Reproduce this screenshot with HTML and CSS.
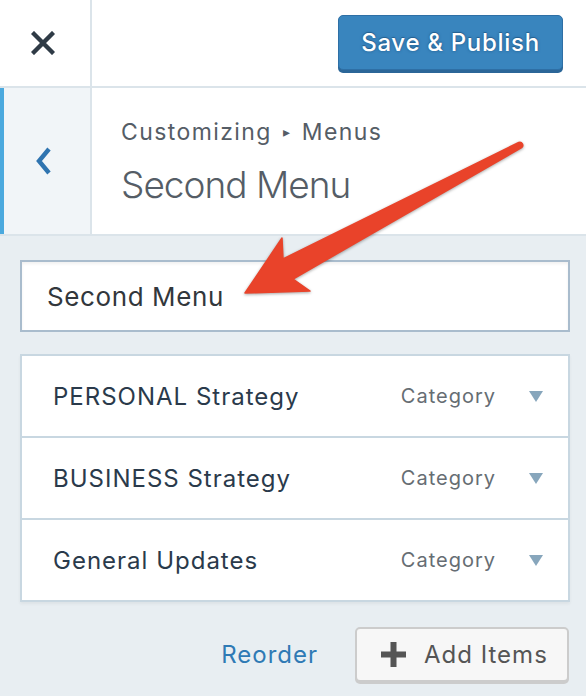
FILE: index.html
```html
<!DOCTYPE html>
<html>
<head>
<meta charset="utf-8">
<link rel="stylesheet" href="styles.css">
</head>
<body>
<div class="panel">
  <header class="topbar">
    <div class="close">
      <svg width="24" height="24" viewBox="0 0 24 24"><path d="M3 3 L21 21 M21 3 L3 21" stroke="#2f3b46" stroke-width="4.4" stroke-linecap="square" fill="none"/></svg>
    </div>
    <div class="actions">
      <button class="btn-primary">Save &amp; Publish</button>
    </div>
  </header>
  <section class="section-head">
    <div class="back">
      <svg width="18" height="30" viewBox="0 0 18 30"><path d="M14 3 L4 15 L14 27" stroke="#2f74b0" stroke-width="4.4" fill="none"/></svg>
    </div>
    <div class="titles">
      <div class="crumb">Customizing <span class="caret">&#9656;</span> Menus</div>
      <h3 class="title">Second Menu</h3>
    </div>
  </section>
  <main class="content">
    <div class="name-input">Second Menu</div>
    <ul class="menu-list">
      <li class="menu-item"><span class="item-title">PERSONAL Strategy</span><span class="item-type">Category</span><span class="tri"></span></li>
      <li class="menu-item"><span class="item-title">BUSINESS Strategy</span><span class="item-type">Category</span><span class="tri"></span></li>
      <li class="menu-item"><span class="item-title">General Updates</span><span class="item-type">Category</span><span class="tri"></span></li>
    </ul>
    <div class="footer-row">
      <a class="reorder">Reorder</a>
      <button class="btn-add">
        <svg width="27" height="27" viewBox="0 0 27 27"><path d="M13.5 1 V26 M1 13.5 H26" stroke="#555" stroke-width="6" fill="none"/></svg>
        <span>Add Items</span>
      </button>
    </div>
  </main>
  <svg class="arrow" width="586" height="696" viewBox="0 0 586 696">
    <path d="M245,293 L282,238 L283,259 L518.8,142.4 A3,3 0 0 1 521.6,147.6 L293,279 L310,291 Z" fill="#e9432a" stroke="#e9432a" stroke-width="1.5" stroke-linejoin="round"/>
  </svg>
</div>
</body>
</html>
```

FILE: styles.css
```css
* { box-sizing: border-box; }
html, body { margin: 0; padding: 0; }
body {
  width: 586px;
  height: 696px;
  overflow: hidden;
  background: #e8eef2;
  font-family: Inter, "Noto Sans", sans-serif;
}
.panel { position: relative; width: 586px; height: 696px; }

.topbar {
  display: flex;
  height: 88px;
  background: #fff;
  border-bottom: 2px solid #dbe4ea;
}
.close {
  width: 92px;
  border-right: 2px solid #dbe4ea;
  display: flex;
  align-items: center;
  justify-content: center;
  padding-right: 4px;
}
.actions {
  flex: 1;
  display: flex;
  align-items: center;
  justify-content: flex-end;
  padding-right: 23px;
}
.btn-primary {
  width: 225px;
  height: 55px;
  margin-top: -2px;
  background: #3985be;
  border: 1px solid #2e6fa5;
  border-radius: 5px;
  box-shadow: 0 3px 0 #2b6698;
  color: #fff;
  font-family: Inter, sans-serif;
  font-size: 24px;
  font-weight: 500;
  letter-spacing: 0.7px;
  text-shadow: 0 0 3px #1f5a8a, 0 -1px 0 #2a6798;
  padding: 0;
}

.section-head {
  display: flex;
  height: 148px;
  background: #fff;
  border-bottom: 2px solid #dbe4ea;
}
.back {
  width: 92px;
  background: #f1f5f8;
  border-left: 4px solid #4ba9de;
  border-right: 2px solid #dbe4ea;
  display: flex;
  align-items: center;
  justify-content: center;
  padding-right: 6px;
}
.titles {
  padding-left: 29px;
  padding-top: 30px;
  color: #555d66;
}
.crumb {
  font-size: 23px;
  line-height: 28px;
  font-weight: 400;
  letter-spacing: 1.4px;
}
.caret { font-size: 14px; vertical-align: 3px; margin: 0 3px; }
.title {
  margin: 17px 0 0;
  font-size: 37px;
  line-height: 44px;
  font-weight: 300;
  letter-spacing: -1px;
}

.content {
  padding: 24px 16px 0 20px;
}
.name-input {
  height: 72px;
  background: #fff;
  border: 2px solid #a9bccd;
  box-shadow: inset 0 2px 3px rgba(0,0,0,0.06);
  padding-left: 25px;
  display: flex;
  align-items: center;
  font-size: 26px;
  letter-spacing: 0.6px;
  color: #32373c;
}
.menu-list {
  list-style: none;
  margin: 22px 0 0;
  padding: 0;
  background: #fff;
  border: 2px solid #c8d7e1;
  box-shadow: 0 2px 3px rgba(0,0,0,0.05);
}
.menu-item {
  display: flex;
  align-items: center;
  height: 82px;
  padding: 0 25px 0 31px;
  border-top: 2px solid #c8d7e1;
}
.menu-item:first-child { height: 80px; border-top: 0; }
.item-title {
  flex: 1;
  font-size: 24px;
  letter-spacing: 1px;
  color: #2a3a4b;
}
.item-type {
  font-size: 20px;
  letter-spacing: 1px;
  color: #666d73;
  margin-right: 33px;
}
.tri {
  width: 0;
  height: 0;
  border-left: 7px solid transparent;
  border-right: 7px solid transparent;
  border-top: 11px solid #87a6bc;
}

.footer-row {
  display: flex;
  justify-content: flex-end;
  align-items: center;
  margin-top: 25px;
  gap: 37px;
  padding-right: 1px;
}
.reorder {
  font-size: 24px;
  letter-spacing: 1px;
  color: #2f7ab5;
}
.btn-add {
  width: 214px;
  height: 55px;
  display: flex;
  align-items: center;
  gap: 17px;
  padding: 0 0 0 23px;
  background: #f7f7f7;
  border: 2px solid #cccccc;
  border-radius: 5px;
  box-shadow: 0 2px 0 #cccccc;
  font-family: Inter, sans-serif;
  font-size: 24px;
  letter-spacing: 1px;
  color: #555;
}

.arrow {
  position: absolute;
  left: 0;
  top: 0;
  pointer-events: none;
  filter: drop-shadow(0 1px 1.5px rgba(0,0,0,0.35));
}
```
